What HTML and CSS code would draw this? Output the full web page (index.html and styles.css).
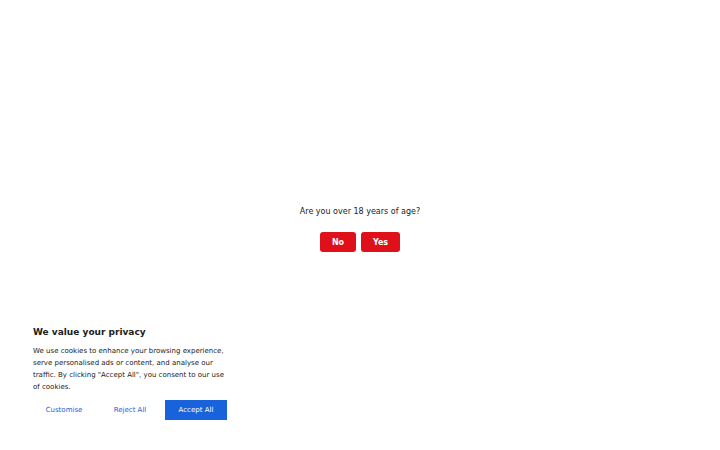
FILE: index.html
```html
<!DOCTYPE html>
<html>
<head>
<meta charset="utf-8">
<link rel="stylesheet" href="styles.css">
</head>
<body>
<main class="age-gate">
  <p class="question">Are you over 18 years of age?</p>
  <div class="age-buttons">
    <button class="age-btn age-no">No</button>
    <button class="age-btn age-yes">Yes</button>
  </div>
</main>
<section class="consent">
  <h2 class="consent-title">We value your privacy</h2>
  <p class="consent-text">We use cookies to enhance your browsing experience, serve personalised ads or content, and analyse our traffic. By clicking "Accept All", you consent to our use of cookies.</p>
  <div class="consent-buttons">
    <button class="c-btn c-ghost">Customise</button>
    <button class="c-btn c-ghost">Reject All</button>
    <button class="c-btn c-primary">Accept All</button>
  </div>
</section>
</body>
</html>
```
FILE: styles.css
```css
html, body {
  margin: 0;
  padding: 0;
  background: #fff;
  font-family: "DejaVu Sans", sans-serif;
  color: #212121;
}
body {
  width: 720px;
  height: 450px;
  position: relative;
  overflow: hidden;
}
.age-gate {
  display: flex;
  flex-direction: column;
  align-items: center;
  padding-top: 205px;
}
.question {
  margin: 0;
  font-size: 8px;
  line-height: 13px;
  color: #222;
}
.age-buttons {
  display: flex;
  gap: 5px;
  margin-top: 14px;
}
.age-btn {
  height: 20px;
  border: none;
  border-radius: 3px;
  background: #e0101a;
  color: #fff;
  font-family: "DejaVu Sans", sans-serif;
  font-weight: bold;
  font-size: 8px;
  padding: 0;
}
.age-no { width: 36px; }
.age-yes { width: 39px; }
.consent {
  position: absolute;
  left: 0;
  bottom: 0;
  width: 194px;
  padding: 24px 33px 30px 33px;
  background: #fff;
}
.consent-title {
  margin: 0;
  font-size: 9px;
  font-weight: bold;
  line-height: 14px;
  color: #212121;
}
.consent-text {
  margin: 6px 0 0 0;
  font-size: 7px;
  line-height: 12px;
  color: #212121;
}
.consent-buttons {
  display: flex;
  gap: 4px;
  margin-top: 7px;
}
.c-btn {
  width: 62px;
  height: 20px;
  padding: 0;
  border: none;
  font-family: "DejaVu Sans", sans-serif;
  font-size: 7px;
  color: #1863dc;
  background: transparent;
}
.c-primary {
  background: #1863dc;
  color: #fff;
}
```
